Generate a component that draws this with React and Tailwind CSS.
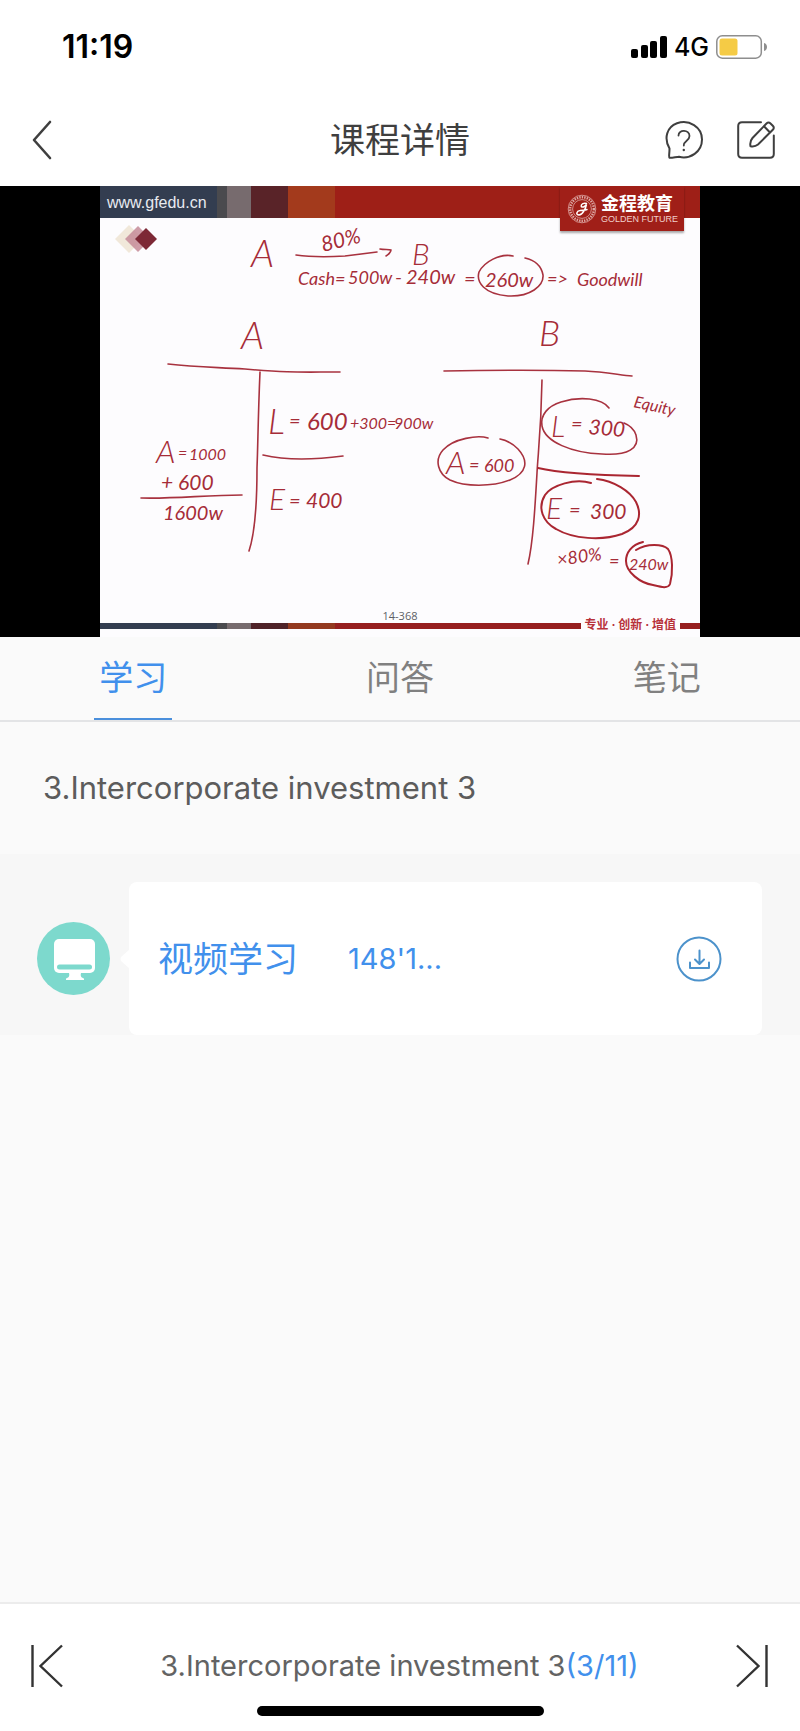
const notes = [
    { text: 'A', x: 151, y: 49, size: 38 },
    { text: '80%', x: 223, y: 34, size: 21, rotate: -14 },
    { text: 'B', x: 312, y: 47, size: 30 },
    { text: 'Cash=', x: 198, y: 67, size: 18 },
    { text: '500w', x: 248, y: 66, size: 18 },
    { text: '-', x: 295, y: 66, size: 20 },
    { text: '240w', x: 306, y: 66, size: 20 },
    { text: '=', x: 364, y: 68, size: 20 },
    { text: '260w', x: 385, y: 69, size: 20 },
    { text: '=>', x: 447, y: 67, size: 18 },
    { text: 'Goodwill', x: 477, y: 68, size: 18 },
    { text: 'A', x: 141, y: 131, size: 38 },
    { text: 'B', x: 439, y: 128, size: 36 },
    { text: 'L', x: 168, y: 216, size: 36 },
    { text: '=', x: 189, y: 210, size: 20 },
    { text: '600', x: 207, y: 212, size: 24 },
    { text: '+300=', x: 250, y: 211, size: 16 },
    { text: '900w', x: 294, y: 211, size: 16 },
    { text: 'E', x: 169, y: 292, size: 30 },
    { text: '=', x: 189, y: 290, size: 20 },
    { text: '400', x: 206, y: 290, size: 21 },
    { text: 'A', x: 56, y: 245, size: 32 },
    { text: '=', x: 78, y: 241, size: 16 },
    { text: '1000', x: 89, y: 242, size: 16 },
    { text: '+ 600', x: 61, y: 272, size: 21 },
    { text: '1600w', x: 63, y: 302, size: 20 },
    { text: 'L', x: 451, y: 219, size: 30 },
    { text: '=', x: 471, y: 213, size: 20 },
    { text: '300', x: 488, y: 216, size: 21, rotate: 5 },
    { text: 'Equity', x: 533, y: 189, size: 16, rotate: 12 },
    { text: 'A', x: 346, y: 256, size: 32 },
    { text: '=', x: 369, y: 253, size: 18 },
    { text: '600', x: 384, y: 254, size: 18 },
    { text: 'E', x: 446, y: 301, size: 30 },
    { text: '=', x: 469, y: 299, size: 20 },
    { text: '300', x: 490, y: 301, size: 21 },
    { text: '×80%', x: 458, y: 348, size: 18, rotate: -8 },
    { text: '=', x: 509, y: 349, size: 18 },
    { text: '240w', x: 529, y: 352, size: 16 },
];

const Whiteboard = () => (
    <svg viewBox="0 0 600 390" className="block w-full" role="img" aria-label="Balance sheet notes">
        <path d="M15 21 29 7 43 21 29 35Z" fill="#f1e8da" />
        <path d="M25 21 38 8 51 21 38 34Z" fill="#c58b98" fillOpacity="0.85" />
        <path d="M35 21 46 10 57 21 46 32Z" fill="#7d2836" />
        <g fill="none" stroke="#a8323f" strokeWidth="1.6" strokeLinecap="round" strokeLinejoin="round">
            <path d="M196 37C210 39 228 39 245 38L277 34M280 31C284 32 289 31 291 32C291 34 288 37 286 38" />
            <path d="M413 38C400 35 384 44 379 54C376 64 384 76 408 78C430 79 444 68 443 57C441 46 434 42 425 40" />
            <path d="M68 146C95 149 110 149 145 151C190 155 200 154 240 154" />
            <path d="M160 154C158 200 158 225 157 250C157 280 155 315 149 333" />
            <path d="M163 237C180 241 205 243 243 238" />
            <path d="M41 280C75 281 105 277 142 277" />
            <path d="M344 153C400 152 445 152 485 153C505 154 520 157 532 158" />
            <path d="M442 162C441 215 438 235 437 255C435 290 433 325 428 346" />
            <path d="M509 190C502 180 480 178 461 184C448 188 440 197 442 208C445 224 472 235 502 236C528 238 540 230 536 217C534 211 529 207 524 205" />
            <path d="M388 220C378 217 354 220 343 232C334 242 338 256 350 262C365 269 392 269 410 262C427 255 429 243 418 231C413 226 406 222 400 221" />
        </g>
        <g fill="none" stroke="#aa2631" strokeWidth="2" strokeLinecap="round">
            <path d="M438 250C455 254 490 257 539 258" />
            <path d="M491 265C475 260 452 267 445 277C437 290 443 304 456 311C473 321 502 323 522 316C540 309 542 296 536 284C530 273 514 263 497 261" />
            <path d="M543 324C531 327 526 335 526 343C526 354 540 365 553 367C561 369 568 371 570 366C573 355 573 338 568 331C563 326 547 325 536 332" />
        </g>
        <g fill="#a62c38" className="font-['Lato',sans-serif] italic">
            {notes.map(({ text, x, y, size, rotate = 0 }) => (
                <text
                    key={`${x}-${y}`}
                    x={x}
                    y={y}
                    fontSize={size}
                    transform={`rotate(${rotate} ${x} ${y})`}
                    className={size > 26 ? 'font-light' : 'font-normal'}
                >
                    {text}
                </text>
            ))}
        </g>
    </svg>
);

const Emblem = () => (
    <svg viewBox="0 0 30 30" className="size-[30px] shrink-0" fill="none" stroke="#f3d9d6">
        <circle cx="15" cy="15" r="13.8" strokeWidth="0.6" />
        <circle cx="15" cy="15" r="11.8" strokeWidth="2.4" strokeDasharray="1.4 1.1" strokeOpacity="0.75" />
        <circle cx="15" cy="15" r="9.4" strokeWidth="0.6" />
        <path d="M19.5 9.5C17 8.5 14 10 14.2 12.2C14.5 14 18 13 19.5 10.5C18.5 15 15.5 21 12 21C8.5 21 9.5 17 13 16.5C16 16 18 16.5 20 15.5" strokeWidth="1.5" stroke="#fff" strokeLinecap="round" />
    </svg>
);

const Slide = () => (
    <div className="relative flex w-3/4 flex-col bg-[#fdfcfe]">
        <div className="flex h-8 bg-[#9e1f17]">
            <span className="w-[117px] bg-[#333d50] pl-[7px] font-['Liberation_Sans',sans-serif] text-base leading-[34px] text-[#e8ebf0]">
                www.gfedu.cn
            </span>
            <span className="w-[10px] bg-[#4a4a4e]" />
            <span className="w-6 bg-[#776b6e]" />
            <span className="w-[37px] bg-[#592328]" />
            <span className="w-[47px] bg-[#a33a1c]" />
        </div>
        <div className="absolute top-0 right-4 flex h-[45px] w-[124px] items-center gap-1 bg-[#a01f18] pl-[7px] shadow-[0_2px_2px_#0005]">
            <Emblem />
            <div className="flex flex-col whitespace-nowrap text-white">
                <span className="text-lg leading-5 font-bold">金程教育</span>
                <span className="font-['Liberation_Sans',sans-serif] text-[9px] leading-[10px] text-[#f0cfcb]">GOLDEN FUTURE</span>
            </div>
        </div>
        <Whiteboard />
        <p className="text-center font-['Open_Sans',sans-serif] text-[11px] leading-[15px] text-[#5c5f66]">14-368</p>
        <div className="relative mb-2 flex h-1.5 bg-[#961f1f]">
            <span className="w-[117px] bg-[#333d50]" />
            <span className="w-[10px] bg-[#4a4a4e]" />
            <span className="w-6 bg-[#776b6e]" />
            <span className="w-[37px] bg-[#4f2228]" />
            <span className="w-[47px] bg-[#93391f]" />
            <span className="absolute right-5 -bottom-1 bg-[#fdfcfe] px-1 text-xs leading-4 font-bold whitespace-nowrap text-[#b8323a]">
                专业 · 创新 · 增值
            </span>
        </div>
    </div>
);

const StatusBar = () => (
    <div className="flex h-[94px] items-center justify-between pr-[33px] pl-[62px] text-black">
        <span className="text-[32px] leading-8 font-semibold">11:19</span>
        <div className="flex items-center gap-[7px]">
            <svg viewBox="0 0 36 22" className="h-[22px] w-9">
                <rect x="0" y="13" width="7" height="9" rx="2" />
                <rect x="10" y="9" width="7" height="13" rx="2" />
                <rect x="19" y="5" width="7" height="17" rx="2" />
                <rect x="29" y="0" width="7" height="22" rx="2" />
            </svg>
            <span className="text-[25px] leading-8 font-medium">4G</span>
            <svg viewBox="0 0 51 24" className="h-6 w-[51px]">
                <rect x="0.8" y="0.8" width="44.5" height="22.4" rx="5.5" fill="none" stroke="#8e8e8e" strokeWidth="1.5" />
                <rect x="3.5" y="3.5" width="18" height="17" rx="2.5" fill="#f5cb45" />
                <path d="M48 8C52 9 52 15 48 16Z" fill="#8e8e8e" />
            </svg>
        </div>
    </div>
);

const Header = () => (
    <header className="flex h-[92px] items-center justify-between pr-[25px] pl-8 text-[#3f3f3f]">
        <button className="w-[103px]" aria-label="Back">
            <svg viewBox="0 0 20 40" className="h-10 w-5" fill="none" stroke="currentColor" strokeWidth="2.6" strokeLinecap="round" strokeLinejoin="round">
                <path d="M18 2 2 20 18 38" />
            </svg>
        </button>
        <h1 className="text-[35px] leading-10">课程详情</h1>
        <div className="flex gap-[34px]">
            <button aria-label="Help">
                <svg viewBox="0 0 38 38" className="size-[38px]" fill="none" stroke="currentColor" strokeWidth="2" strokeLinecap="round" strokeLinejoin="round">
                    <path d="M4.5 27.5C-1.5 17 2 6 12 2.3C24-2 37 6 37 18.5C37 31 25 38.5 14 35.8C11 36 7 37 4.5 36.8C3.5 36.5 4.5 33 4.5 27.5Z" />
                    <path d="M13.5 14.5C13.5 8 24.5 8.5 24.5 15C24.5 20 18.8 19.5 18.8 24.5" strokeWidth="1.8" />
                    <circle cx="18.8" cy="29" r="1.2" fill="currentColor" stroke="none" />
                </svg>
            </button>
            <button aria-label="Write note">
                <svg viewBox="0 0 38 38" className="size-[38px]" fill="none" stroke="currentColor" strokeWidth="2" strokeLinecap="round" strokeLinejoin="round">
                    <path d="M24 1.2H5Q1.2 1.2 1.2 5V33Q1.2 36.8 5 36.8H33Q36.8 36.8 36.8 33V14.5" />
                    <path d="M29.5 2.5Q31.5 0.5 33.5 2.5L35.8 4.8Q37.8 6.8 35.8 8.8L21 23.5Q18 26 13.5 25.2Q12.5 20.5 15.5 17ZM27 5.2 33 11.5" />
                </svg>
            </button>
        </div>
    </header>
);

const tabs = ['学习', '问答', '笔记'];

const Tabs = () => (
    <nav className="flex h-[85px] border-b-2 border-[#e3e4e6]">
        {tabs.map((tab, i) => (
            <div key={tab} className="flex flex-1 justify-center">
                <button
                    className={
                        i === 0
                            ? 'w-[78px] border-b-2 border-[#4a8fdc] text-[34px] leading-10 text-[#4190ec]'
                            : 'w-[78px] border-b-2 border-transparent text-[34px] leading-10 text-[#808080]'
                    }
                >
                    {tab}
                </button>
            </div>
        ))}
    </nav>
);

const LessonRow = () => (
    <div className="flex items-center gap-[19px] bg-[#f7f7f7] pt-7 pr-[38px] pl-[37px]">
        <svg viewBox="0 0 73 73" className="size-[73px] shrink-0">
            <circle cx="36.5" cy="36.5" r="36.5" fill="#7dd9cd" />
            <rect x="17" y="17" width="41" height="34" rx="5" fill="#fff" />
            <rect x="20" y="42.5" width="35" height="5" rx="2.5" fill="#7dd9cd" />
            <path d="M32 51H44C43 55 45 55.5 47 56.5V58H29V56.5C31 55.5 33 55 32 51Z" fill="#fff" />
        </svg>
        <div className="relative flex h-[153px] flex-1 items-center rounded-lg bg-white pr-10 pl-[29px] text-[#4190ec]">
            <svg viewBox="0 0 10 20" className="absolute -left-[9px] h-5 w-[10px]">
                <path d="M10 0V20L1 12Q0 10 1 8Z" fill="#fff" />
            </svg>
            <a href="#video" className="flex flex-1 items-center gap-[50px]">
                <span className="text-[35px] leading-10">视频学习</span>
                <span className="text-[29px] leading-10">148'1...</span>
            </a>
            <button aria-label="Download">
                <svg viewBox="0 0 46 46" className="size-[46px]" fill="none" stroke="#4c92cb" strokeWidth="2" strokeLinecap="round" strokeLinejoin="round">
                    <circle cx="23" cy="23" r="21.5" />
                    <path d="M23.5 14.5V27M19 23.5 23.5 28 28 23.5M14 26.5V32H33V26.5" />
                </svg>
            </button>
        </div>
    </div>
);

const Footer = () => (
    <footer className="flex flex-col items-center gap-[18px] border-t-2 border-[#ececec] bg-white pt-10 pb-[15px]">
        <div className="flex w-full items-center justify-between pr-8 pl-[31px] text-[#333]">
            <button aria-label="Previous lesson">
                <svg viewBox="0 0 32 44" className="h-11 w-8" fill="none" stroke="currentColor" strokeWidth="2.4">
                    <path d="M1.5 1V43M31 1.5 9.5 22 31 42.5" />
                </svg>
            </button>
            <p className="text-[29px] leading-10 text-[#636363]">
                3.Intercorporate investment 3<span className="text-[#4190ec]">(3/11)</span>
            </p>
            <button aria-label="Next lesson">
                <svg viewBox="0 0 32 44" className="h-11 w-8" fill="none" stroke="currentColor" strokeWidth="2.4">
                    <path d="M30.5 1V43M1 1.5 22.5 22 1 42.5" />
                </svg>
            </button>
        </div>
        <div className="h-[10px] w-[287px] rounded-full bg-black" />
    </footer>
);

export default function App() {
    return (
        <div className="flex min-h-screen flex-col bg-white font-['Inter','Noto_Sans_CJK_SC',sans-serif]">
            <StatusBar />
            <Header />
            <div className="flex justify-center bg-black">
                <Slide />
            </div>
            <main className="flex-1 bg-[#fafafa]">
                <Tabs />
                <h2 className="px-[43px] py-[46px] text-[31px] leading-10 text-[#5c5c5c]">3.Intercorporate investment 3</h2>
                <LessonRow />
            </main>
            <Footer />
        </div>
    );
}
